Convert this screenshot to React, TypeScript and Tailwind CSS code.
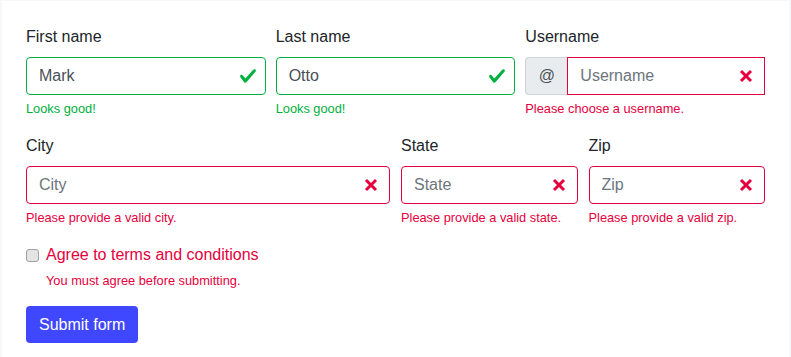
import React from "react";

const GREEN = "#00b140";
const RED = "#e5003d";

function Check() {
  return (
    <svg viewBox="0 0 8 8" width="18" height="18" className="absolute right-[9px] top-1/2 -translate-y-1/2">
      <path
        fill={GREEN}
        d="M2.3 6.73L.6 4.53c-.4-1.04.46-1.4 1.1-.8l1.1 1.4 3.4-3.8c.6-.63 1.6-.27 1.2.7l-4 4.6c-.43.5-.8.4-1.1.1z"
      />
    </svg>
  );
}

function Cross() {
  return (
    <svg viewBox="0 0 18 18" width="18" height="18" className="absolute right-[10px] top-1/2 -translate-y-1/2">
      <path d="M4 4L14 14M14 4L4 14" stroke={RED} strokeWidth="3" strokeLinecap="butt" />
    </svg>
  );
}

function Field({
  label,
  value,
  placeholder,
  valid,
  feedback,
}: {
  label: string;
  value?: string;
  placeholder: string;
  valid: boolean;
  feedback: string;
}) {
  return (
    <div className="flex flex-col">
      <label className="text-[16px] leading-6 text-[#212529] mb-2">{label}</label>
      <div className="relative">
        <input
          readOnly
          defaultValue={value}
          placeholder={placeholder}
          className={
            "w-full h-[38px] rounded-[4px] border bg-white pl-3 pr-9 text-[16px] text-[#495057] placeholder:text-[#6c757d] outline-none " +
            (valid ? "border-[#00b140]" : "border-[#e5003d]")
          }
        />
        {valid ? <Check /> : <Cross />}
      </div>
      <div
        className={
          "mt-1 text-[12.8px] leading-[19px] " + (valid ? "text-[#00b140]" : "text-[#e5003d]")
        }
      >
        {feedback}
      </div>
    </div>
  );
}

export default function App() {
  return (
    <div
      className="min-h-screen bg-[#f7f8f9] pt-[1px] pl-[2px] pr-[2px] flex"
      style={{ fontFamily: '"Liberation Sans", Arial, sans-serif' }}
    >
      <div className="flex-1 bg-white px-6 pt-6 pb-4">
        <div className="grid grid-cols-3 gap-x-[10px]">
          <Field label="First name" value="Mark" placeholder="First name" valid feedback="Looks good!" />
          <Field label="Last name" value="Otto" placeholder="Last name" valid feedback="Looks good!" />
          <div className="flex flex-col">
            <label className="text-[16px] leading-6 text-[#212529] mb-2">Username</label>
            <div className="flex h-[38px]">
              <span className="w-[42px] flex items-center justify-center rounded-l-[4px] border border-r-0 border-[#ced4da] bg-[#e9ecef] text-[16px] text-[#495057]">
                @
              </span>
              <div className="relative flex-1">
                <input
                  readOnly
                  placeholder="Username"
                  className="w-full h-[38px] border border-[#e5003d] bg-white pl-3 pr-9 text-[16px] text-[#495057] placeholder:text-[#6c757d] outline-none"
                />
                <Cross />
              </div>
            </div>
            <div className="mt-1 text-[12.8px] leading-[19px] text-[#e5003d]">Please choose a username.</div>
          </div>
        </div>

        <div className="grid grid-cols-4 gap-x-[11px] mt-4">
          <div className="col-span-2">
            <Field label="City" placeholder="City" valid={false} feedback="Please provide a valid city." />
          </div>
          <Field label="State" placeholder="State" valid={false} feedback="Please provide a valid state." />
          <Field label="Zip" placeholder="Zip" valid={false} feedback="Please provide a valid zip." />
        </div>

        <div className="mt-4">
          <div className="flex items-center h-6">
            <input
              type="checkbox"
              className="w-[13px] h-[13px] m-0 appearance-none rounded-[3px] border border-[#a0a0a0] bg-[#e4e4e4]"
            />
            <label className="ml-[7px] text-[16px] text-[#e5003d]">Agree to terms and conditions</label>
          </div>
          <div className="ml-5 mt-1 text-[12.8px] leading-[19px] text-[#e5003d]">
            You must agree before submitting.
          </div>
        </div>

        <button className="mt-4 h-[37px] px-[13px] rounded-[4px] bg-[#4048ff] text-white text-[16px]">
          Submit form
        </button>
      </div>
    </div>
  );
}
